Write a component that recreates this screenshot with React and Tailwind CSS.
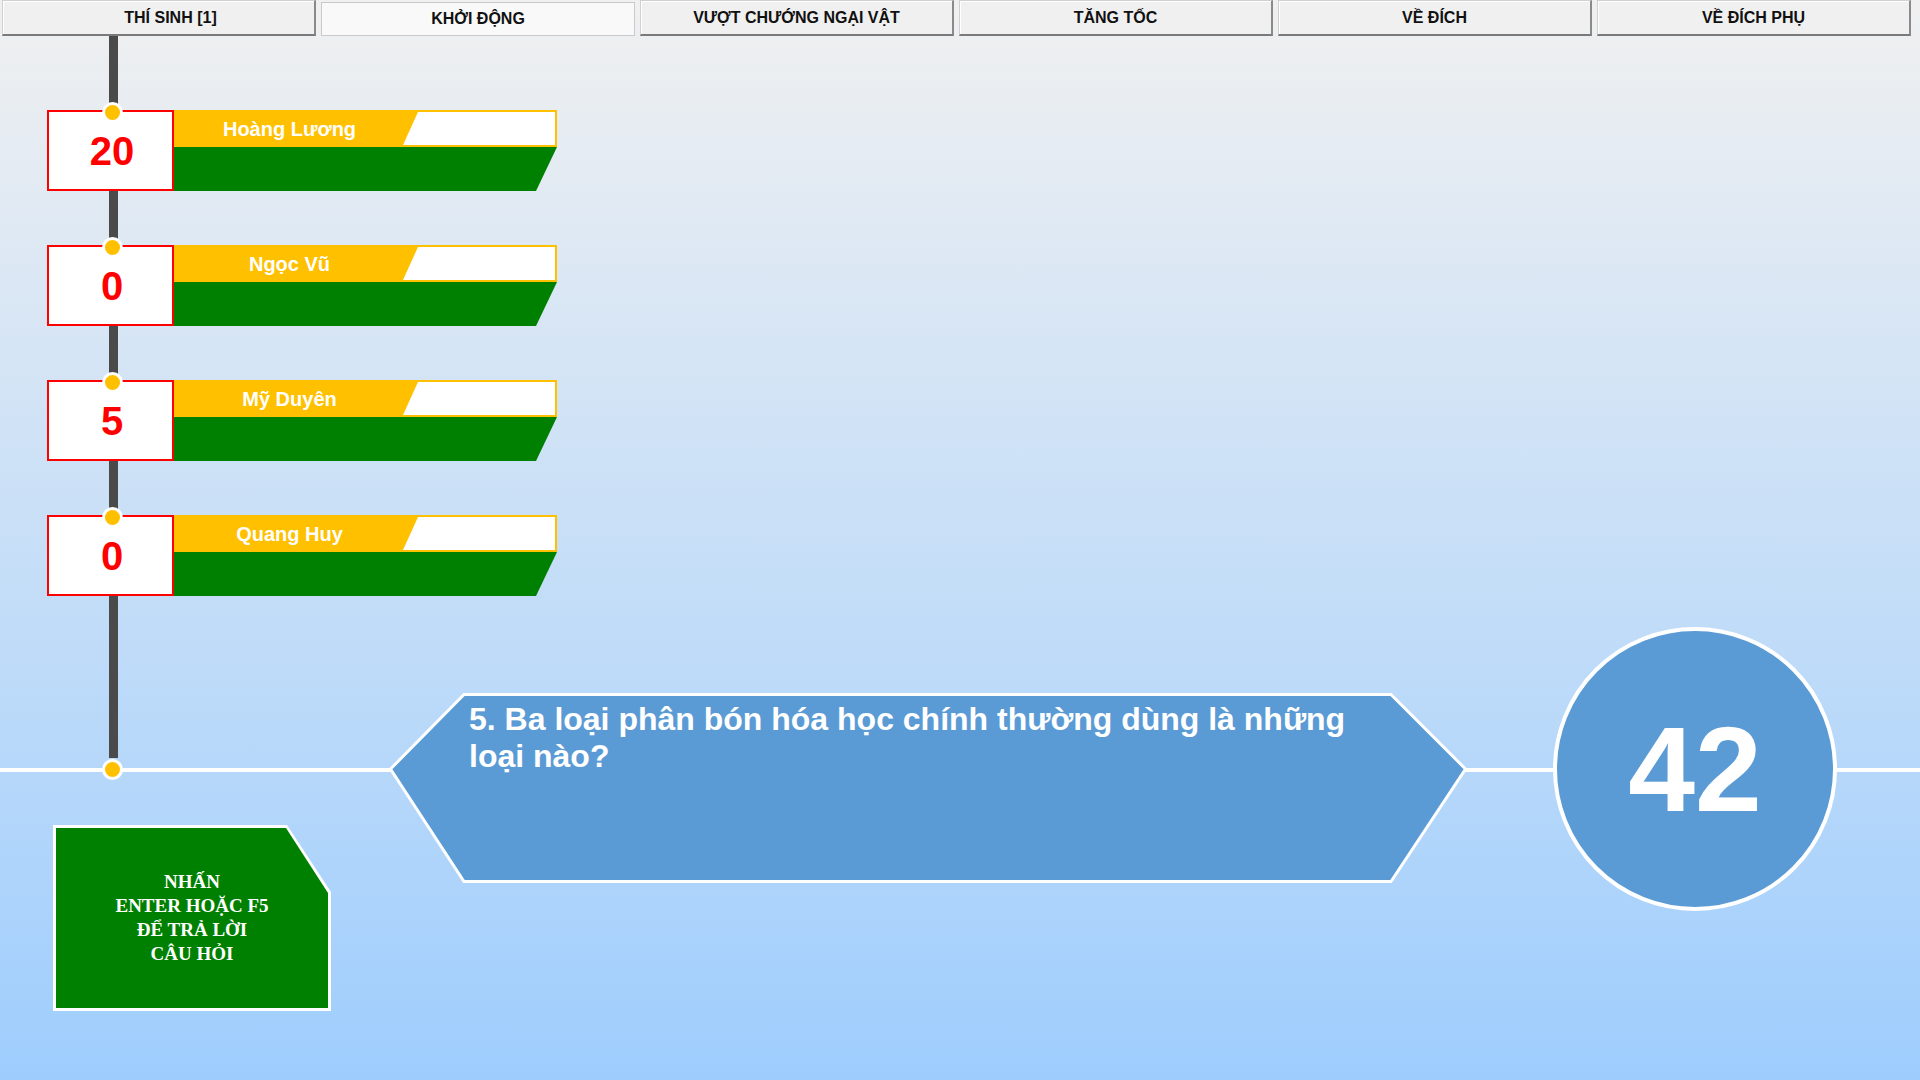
import React from 'react';

const tabs = ['THÍ SINH [1]', 'KHỞI ĐỘNG', 'VƯỢT CHƯỚNG NGẠI VẬT', 'TĂNG TỐC', 'VỀ ĐÍCH', 'VỀ ĐÍCH PHỤ'];

const players = [
  { name: 'Hoàng Lương', score: 20 },
  { name: 'Ngọc Vũ', score: 0 },
  { name: 'Mỹ Duyên', score: 5 },
  { name: 'Quang Huy', score: 0 },
];

const Dot = ({ className }) => (
  <div className={`absolute w-[21px] h-[21px] rounded-full bg-[#ffc000] border-[3px] border-white ${className}`} />
);

const PlayerCard = ({ name, score }) => (
  <div className="flex h-[81px]">
    <div className="relative w-[127px] h-full border-2 border-[#ff0000] bg-white flex items-center justify-center">
      <Dot className="left-[53px] -top-[10px]" />
      <span className="text-[40px] font-bold text-[#ff0000] leading-none pl-[3px]">{score}</span>
    </div>
    <div className="w-[383px] flex flex-col">
      <div className="h-[37px] bg-[#ffc000] flex p-[2px]">
        <span className="flex-1 flex items-center justify-center text-white font-bold text-[20px]">{name}</span>
        <div className="w-[152px] h-full bg-white [clip-path:polygon(15px_0,100%_0,100%_100%,0_100%)]" />
      </div>
      <div className="flex-1 bg-[#008000] [clip-path:polygon(0_0,383px_0,362px_100%,0_100%)]" />
    </div>
  </div>
);

const Question = () => (
  <div className="relative w-[1078px] h-[190px] mt-[66px] ml-[58px]">
    <svg className="absolute inset-0" width="1078" height="190" viewBox="0 0 1078 190">
      <polygon points="1.5,76 75,1.5 1002,1.5 1076.5,76 1002,188.5 75,188.5" fill="#5b9bd5" stroke="#ffffff" strokeWidth="3" />
    </svg>
    <p className="relative pl-[80px] pt-[8px] pr-[40px] text-white font-bold text-[32px] leading-[37px]">
      5. Ba loại phân bón hóa học chính thường dùng là những
      <br />
      loại nào?
    </p>
  </div>
);

export default function App() {
  return (
    <div className="h-screen w-full overflow-hidden flex flex-col bg-linear-to-b from-[#f0f0f0] to-[#9ecdfd] font-['Liberation_Sans',Arial,sans-serif]">
      {/* tab bar */}
      <div className="h-[36px] flex gap-[5px] px-[2px]">
        {tabs.map((t, i) =>
          i === 1 ? (
            <div key={t} className="w-[314px] mt-[2px] flex items-center justify-center bg-[#f9f9f9] border border-[#c9c9c9] text-[16px] font-bold text-[#111]">
              {t}
            </div>
          ) : (
            <div
              key={t}
              className={`w-[314px] flex items-center justify-center bg-[#f0f0f0] border border-[#d0d0d0] border-b-2 border-r-2 border-b-[#7a7a7a] border-r-[#8a8a8a] shadow-[inset_1px_1px_0_#ffffff] text-[16px] font-bold text-[#111] ${i === 0 ? 'pl-[24px]' : ''}`}
            >
              {t}
            </div>
          )
        )}
      </div>

      {/* stage */}
      <div className="relative flex-1">
        <div className="absolute left-[109px] top-0 w-[9px] h-[722px] bg-[#4a4a4a]" />
        <div className="absolute left-0 right-0 top-[732px] h-[4px] bg-white" />
        <Dot className="left-[102px] top-[723px]" />

        <div className="relative flex flex-col gap-[54px] pt-[74px] pl-[47px]">
          {players.map((p) => (
            <PlayerCard key={p.name} {...p} />
          ))}
        </div>

        <div className="relative flex items-start mt-[31px] pl-[53px]">
          <div className="mt-[198px] w-[278px] h-[186px] bg-white p-[3px] [clip-path:polygon(0_0,234px_0,100%_67px,100%_100%,0_100%)]">
            <div className="w-full h-full bg-[#008000] flex items-center justify-center text-center text-white font-bold text-[19px] leading-[24px] font-['Liberation_Serif','Times_New_Roman',serif] [clip-path:polygon(0_0,230px_0,100%_65px,100%_100%,0_100%)]">
              <p>
                NHẤN
                <br />
                ENTER HOẶC F5
                <br />
                ĐỂ TRẢ LỜI
                <br />
                CÂU HỎI
              </p>
            </div>
          </div>

          <Question />

          <div className="ml-[86px] w-[284px] h-[284px] rounded-full bg-[#5b9bd5] border-4 border-white flex items-center justify-center">
            <span className="text-white font-bold text-[120px] leading-none">42</span>
          </div>
        </div>
      </div>
    </div>
  );
}
